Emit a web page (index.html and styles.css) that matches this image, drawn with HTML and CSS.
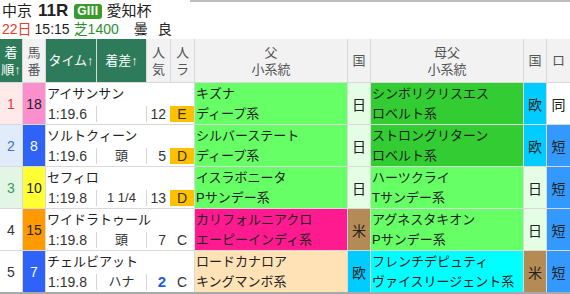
FILE: index.html
```html
<!DOCTYPE html>
<html lang="ja">
<head>
<meta charset="utf-8">
<link rel="stylesheet" href="styles.css">
</head>
<body>
<div class="topline"></div>
<div class="title">
  <span class="venue">中京</span>
  <span class="race">11R</span>
  <span class="grade">GⅢ</span>
  <span class="rname">愛知杯</span>
</div>
<div class="info">
  <span class="day">22日</span>
  <span class="clock">15:15</span>
  <span class="course">芝1400</span>
  <span class="weather">曇</span>
  <span class="cond">良</span>
</div>
<div class="table">
  <div class="h green two"><span>着</span><span>順↑</span></div>
  <div class="h gray two"><span>馬</span><span>番</span></div>
  <div class="h green">タイム↑</div>
  <div class="h green">着差↑</div>
  <div class="h gray two"><span>人</span><span>気</span></div>
  <div class="h gray two"><span>人</span><span>ラ</span></div>
  <div class="h gray two"><span>父</span><span>小系統</span></div>
  <div class="h gray">国</div>
  <div class="h gray two"><span>母父</span><span>小系統</span></div>
  <div class="h gray">国</div>
  <div class="h gray">ロ</div>

  <div class="rank r1">1</div>
  <div class="waku w8">18</div>
  <div class="main">
    <div class="hname">アイサンサン</div>
    <div class="sub"><span class="time">1:19.6</span><span class="margin"></span><span class="pop">12<span class="ra hl">E</span></span></div>
  </div>
  <div class="ped lg"><span>キズナ</span><span>ディープ系</span></div>
  <div class="ctry jp">日</div>
  <div class="ped dg"><span>シンボリクリスエス</span><span>ロベルト系</span></div>
  <div class="ctry eu">欧</div>
  <div class="ro same">同</div>

  <div class="rank r2">2</div>
  <div class="waku w4">8</div>
  <div class="main">
    <div class="hname">ソルトクィーン</div>
    <div class="sub"><span class="time">1:19.6</span><span class="margin">頭</span><span class="pop">5<span class="ra hl">D</span></span></div>
  </div>
  <div class="ped lg"><span>シルバーステート</span><span>ディープ系</span></div>
  <div class="ctry jp">日</div>
  <div class="ped dg"><span>ストロングリターン</span><span>ロベルト系</span></div>
  <div class="ctry eu">欧</div>
  <div class="ro short">短</div>

  <div class="rank r3">3</div>
  <div class="waku w5">10</div>
  <div class="main">
    <div class="hname">セフィロ</div>
    <div class="sub"><span class="time">1:19.8</span><span class="margin">1 1/4</span><span class="pop">13<span class="ra hl">D</span></span></div>
  </div>
  <div class="ped lg"><span>イスラボニータ</span><span>Pサンデー系</span></div>
  <div class="ctry jp">日</div>
  <div class="ped lg"><span>ハーツクライ</span><span>Tサンデー系</span></div>
  <div class="ctry jp">日</div>
  <div class="ro short">短</div>

  <div class="rank">4</div>
  <div class="waku w7">15</div>
  <div class="main">
    <div class="hname">ワイドラトゥール</div>
    <div class="sub"><span class="time">1:19.8</span><span class="margin">頭</span><span class="pop">7<span class="ra">C</span></span></div>
  </div>
  <div class="ped mg"><span>カリフォルニアクロ</span><span>エーピーインディ系</span></div>
  <div class="ctry us">米</div>
  <div class="ped lg"><span>アグネスタキオン</span><span>Pサンデー系</span></div>
  <div class="ctry jp">日</div>
  <div class="ro short">短</div>

  <div class="rank">5</div>
  <div class="waku w4">7</div>
  <div class="main">
    <div class="hname">チェルビアット</div>
    <div class="sub"><span class="time">1:19.8</span><span class="margin">ハナ</span><span class="pop"><b class="fav">2</b><span class="ra">C</span></span></div>
  </div>
  <div class="ped pe"><span>ロードカナロア</span><span>キングマンボ系</span></div>
  <div class="ctry eu">欧</div>
  <div class="ped cy"><span>フレンチデピュティ</span><span>ヴァイスリージェント系</span></div>
  <div class="ctry us">米</div>
  <div class="ro short">短</div>
</div>
</body>
</html>
```

FILE: styles.css
```css
* { box-sizing: border-box; }
html, body { margin: 0; padding: 0; }
body {
  width: 570px;
  height: 294px;
  overflow: hidden;
  background: #fff;
  color: #222;
  font-family: "Liberation Sans", "Noto Sans CJK JP", sans-serif;
}
.topline {
  height: 2px;
  margin-left: 190px;
  background: #bdbdbd;
}
.title {
  height: 18px;
  padding-left: 2px;
  display: flex;
  align-items: center;
  line-height: 18px;
}
.venue { font-size: 15px; }
.race { font-size: 17px; font-weight: bold; margin-left: 6px; }
.grade {
  margin-left: 6px;
  height: 15px;
  line-height: 15px;
  padding: 0 3px;
  border-radius: 3px;
  background: #3a9b2c;
  color: #fff;
  font-size: 12px;
  font-weight: bold;
}
.rname { font-size: 15px; margin-left: 5px; }
.info {
  height: 18px;
  margin-bottom: 1px;
  padding-left: 2px;
  display: flex;
  align-items: center;
  font-size: 14px;
  line-height: 18px;
}
.day { color: #e5402a; }
.clock { margin-left: 3px; }
.course { color: #2f8f2f; margin-left: 4px; }
.weather { margin-left: 15px; }
.cond { margin-left: 10px; }

.table {
  display: grid;
  grid-template-columns: 22px 22px 50px 49px 23px 23px 152px 22px 152px 22px 23px;
  grid-template-rows: 43px repeat(5, 41px);
  gap: 1px;
  width: 570px;
  background: #d9d9d9;
  border-bottom: 2px solid #a9a9a9;
}
.h {
  display: flex;
  align-items: center;
  justify-content: center;
  font-size: 13px;
  line-height: 17px;
  text-align: center;
}
.h.two { flex-direction: column; }
.green { background: #2e7b5c; color: #fff; }
.gray { background: #f2f2f2; color: #555; }

.rank {
  display: flex;
  align-items: center;
  justify-content: center;
  background: #fff;
  color: #333;
  font-size: 14px;
}
.rank.r1 { background: #ffe9e9; color: #e03c3c; }
.rank.r2 { background: #e1ecfa; color: #3a6fd8; }
.rank.r3 { background: #e3f6e6; color: #3a9c5c; }

.waku {
  display: flex;
  align-items: center;
  justify-content: center;
  font-size: 14px;
  color: #222;
}
.w4 { background: #2f62f7; color: #fff; }
.w5 { background: #ffff33; }
.w7 { background: #ff9a00; }
.w8 { background: #fb8fcd; }

.main {
  grid-column: span 4;
  background: #fff;
  display: flex;
  flex-direction: column;
}
.hname {
  height: 21px;
  line-height: 21px;
  padding-left: 1px;
  font-size: 13px;
}
.sub {
  height: 20px;
  display: grid;
  grid-template-columns: 50px 50px 48px;
  align-items: center;
  font-size: 14px;
  color: #333;
}
.sub > span {
  height: 16px;
  line-height: 16px;
}
.time { padding-left: 2px; }
.margin {
  border-left: 1px solid #d6d6d6;
  text-align: center;
  font-size: 13px;
}
.pop {
  border-left: 1px solid #d6d6d6;
  display: flex;
  justify-content: flex-end;
}
.fav { color: #1f5fd8; font-size: 15px; }
.ra {
  width: 24px;
  margin-left: 4px;
  text-align: center;
}
.ra.hl { background: #ffc000; }

.ped {
  display: flex;
  flex-direction: column;
  justify-content: center;
  padding-left: 1px;
  font-size: 13px;
  line-height: 20px;
  white-space: nowrap;
  color: #222;
}
.lg { background: #66ff66; }
.dg { background: #33cc33; }
.mg { background: #ff1a8f; }
.pe { background: #ffe2b6; }
.cy { background: #00ffff; }

.ctry, .ro {
  display: flex;
  align-items: center;
  justify-content: center;
  font-size: 14px;
  color: #222;
}
.jp { background: #e4fde4; }
.eu { background: #00ccff; }
.us { background: #b58b55; }
.same { background: #fff; }
.short { background: #3399ff; }
```
